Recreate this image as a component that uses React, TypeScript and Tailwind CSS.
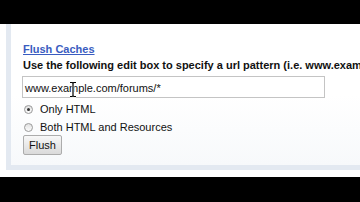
import React from "react";

function Radio({ checked }: { checked: boolean }) {
  return (
    <span className="relative w-[9px] h-[9px] rounded-full border border-[#9a9a9a] bg-gradient-to-b from-[#e2e2e2] to-[#fbfbfb] flex items-center justify-center shrink-0">
      {checked && <span className="w-[3px] h-[3px] rounded-full bg-[#333]" />}
    </span>
  );
}

export default function App() {
  const font = { fontFamily: '"Liberation Sans", Arial, sans-serif' };
  return (
    <div className="w-[360px] h-[202px] bg-black flex flex-col overflow-hidden" style={font}>
      <div className="h-[24px] bg-black shrink-0" />
      <div className="h-[153px] bg-white pl-[6px] pb-[7px] shrink-0">
        <div className="h-full border-l-[5px] border-b-[5px] border-[#e3e9f1] bg-gradient-to-b from-white via-white to-[#f7f9fb] pl-[12px] pt-[19px] flex flex-col overflow-hidden">
          <a className="text-[11px] leading-[13px] font-bold text-[#3a5cc0] underline self-start">
            Flush Caches
          </a>
          <div className="mt-[3px] text-[11px] leading-[13px] font-bold text-[#111] whitespace-nowrap">
            Use the following edit box to specify a url pattern (i.e. www.example.com/*)
          </div>
          <div className="relative mt-[4px] w-[303px] h-[22px] -ml-[1px] border border-[#c4c4c4] bg-white pl-[2px] pt-[5px] text-[11px] leading-[13px] text-[#111]">
            www.example.com/forums/*
            <svg className="absolute left-[46px] top-[4px]" width="8" height="17" viewBox="0 0 8 17">
              <path d="M1 1.5h2.2l0.8 0.8 0.8-0.8H7M4 2.3v12.4M1 15.5h2.2l0.8-0.8 0.8 0.8H7" stroke="#fff" strokeWidth="2.6" fill="none" />
              <path d="M1 1.5h2.2l0.8 0.8 0.8-0.8H7M4 2.3v12.4M1 15.5h2.2l0.8-0.8 0.8 0.8H7" stroke="#000" strokeWidth="1.2" fill="none" />
            </svg>
          </div>
          <div className="mt-[5px] flex flex-col gap-[5px] text-[11px] leading-[13px] text-[#111]">
            <label className="flex items-center gap-[7px] pl-[1px]">
              <Radio checked />
              <span>Only HTML</span>
            </label>
            <label className="flex items-center gap-[7px] pl-[1px]">
              <Radio checked={false} />
              <span>Both HTML and Resources</span>
            </label>
          </div>
          <button className="mt-[1px] self-start h-[20px] px-[5px] border border-[#acacac] rounded-[2px] bg-gradient-to-b from-[#f8f8f8] to-[#dadada] text-[11px] leading-[13px] text-[#111]">
            Flush
          </button>
        </div>
      </div>
      <div className="flex-1 bg-black" />
    </div>
  );
}
